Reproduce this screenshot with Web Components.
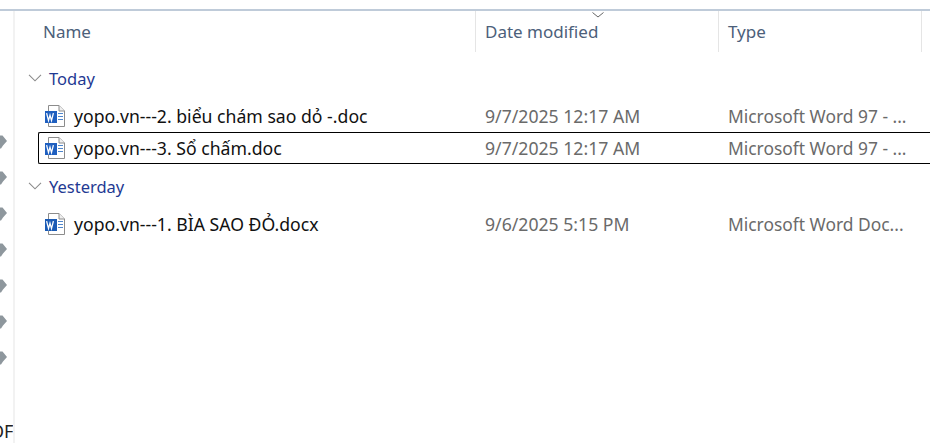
<!DOCTYPE html>
<html><head><meta charset="utf-8"><style>
html,body{margin:0;padding:0;background:#fff;height:100%;overflow:hidden}
body{font-family:"Noto Sans","Open Sans",sans-serif}
</style></head><body>
<template id="t-word"><style>
:host{display:block;width:22px;height:22px;flex:none}svg{display:block}
</style><svg width="22" height="22" viewBox="0 0 22 22"><path d="M4.5 .5H15L20.5 6V21.5H4.5Z" fill="#fff" stroke="#8c8c8c"/><path d="M15 .5V6H20.5" fill="#efefef" stroke="#8c8c8c"/><path d="M14 8.5h5M14 11.5h5M14 14.5h5" stroke="#4f86cc"/><rect x="1" y="6" width="12" height="12" fill="var(--blue,#1f5fbf)"/><path d="M2.6 8.2l1.9 7.4 1.5-5.4 1.5 5.4 1.9-7.4" fill="none" stroke="#fff" stroke-width="1.3"/></svg></template>
<template id="t-app"><style>
:host{display:flex;width:930px;height:443px;box-sizing:border-box;flex-direction:column;overflow:hidden}
.top{height:9px;flex:none;background:#fff}
.rule{height:2px;flex:none;background:#bfcbd9}
.main{flex:1;display:flex;min-height:0}
.rail{width:13px;flex:none;border-right:2px solid #f2f2f2;position:relative;overflow:hidden}
.list{flex:1;min-width:0;display:flex;flex-direction:column}
</style><div class="top"></div><div class="rule"></div><div class="main"><div class="rail"><slot name="rail"></slot></div><div class="list"><slot></slot></div></div></template>
<template id="t-head"><style>
:host{display:grid;grid-template-columns:461px 243px 203px;height:41px;color:#4c607a;font-size:17px;position:relative}
</style><slot></slot></template>
<template id="t-hcol"><style>
:host{display:flex;align-items:center;padding-left:9px;box-sizing:border-box;border-right:1px solid #e5e5e5;height:41px;position:relative}
:host(.first){padding-left:28px}
.s{position:absolute;left:116px;top:1px;display:none}
:host(.sorted) .s{display:block}
</style><slot></slot><svg class="s" width="12" height="6" viewBox="0 0 12 6"><path d="M.5 .5L6 5l5.5-4.5" fill="none" stroke="#666"/></svg></template>
<template id="t-group"><style>
:host{display:flex;align-items:center;height:24px;color:#1f3a93;font-size:16.5px;margin-left:13px;gap:7px;box-sizing:border-box}
</style><svg width="14" height="8" viewBox="0 0 14 8"><path d="M1 .8L7 6.8 13 .8" fill="none" stroke="#8a8a8a" stroke-width="1.1"/></svg><slot></slot></template>
<template id="t-row"><style>
:host{display:grid;grid-template-columns:441px 243px 1fr;height:32px;align-items:center;margin-left:23px;box-sizing:border-box;padding-left:5px;font-size:17.65px;color:#6a6a6a;white-space:nowrap;border:1px solid transparent;border-right:0}
:host([selected]){border-color:#000;border-radius:2px 0 0 2px}
.n{display:flex;align-items:center;gap:8px;color:#111}
.t{font-size:17.4px}
</style><div class="n"><word-icon></word-icon><slot name="name"></slot></div><div class="d"><slot name="date"></slot></div><div class="t"><slot name="type"></slot></div></template>
<template id="t-pin"><style>
:host{display:block;position:absolute;left:0;width:8px;height:14px}svg{display:block}
</style><svg width="8" height="14" viewBox="0 0 8 14"><path d="M0 0.5H2.5L7 6L3 10.5L1 13.5H0Z" fill="#8e979d"/></svg></template>
<template id="t-clip"><style>
:host{display:block;position:absolute;left:-10px;top:410px;font-size:18px;line-height:20px;color:#222;white-space:nowrap}
</style><slot></slot></template>

<file-app>
 <rail-pin slot="rail" style="top:124px"></rail-pin>
 <rail-pin slot="rail" style="top:160px"></rail-pin>
 <rail-pin slot="rail" style="top:196px"></rail-pin>
 <rail-pin slot="rail" style="top:232px"></rail-pin>
 <rail-pin slot="rail" style="top:268px"></rail-pin>
 <rail-pin slot="rail" style="top:304px"></rail-pin>
 <rail-pin slot="rail" style="top:340px"></rail-pin>
 <rail-clip slot="rail">OF</rail-clip>
 <col-head>
  <head-col class="first">Name</head-col>
  <head-col class="sorted">Date modified</head-col>
  <head-col>Type</head-col>
 </col-head>
 <group-row style="margin-top:14px">Today</group-row>
 <file-row style="margin-top:10px"><span slot="name">yopo.vn---2. biểu chám sao dỏ -.doc</span><span slot="date">9/7/2025 12:17 AM</span><span slot="type">Microsoft Word 97 - ...</span></file-row>
 <file-row selected><span slot="name">yopo.vn---3. Sổ chấm.doc</span><span slot="date">9/7/2025 12:17 AM</span><span slot="type">Microsoft Word 97 - ...</span></file-row>
 <group-row style="margin-top:10px">Yesterday</group-row>
 <file-row style="margin-top:10px;--blue:#1b5bb5"><span slot="name">yopo.vn---1. BÌA SAO ĐỎ.docx</span><span slot="date">9/6/2025 5:15 PM</span><span slot="type">Microsoft Word Doc...</span></file-row>
</file-app>
<script>
const def=(n,t)=>customElements.define(n,class extends HTMLElement{constructor(){super();this.attachShadow({mode:'open'}).appendChild(document.getElementById(t).content.cloneNode(true))}});
def('word-icon','t-word');def('file-app','t-app');def('col-head','t-head');def('head-col','t-hcol');def('group-row','t-group');def('file-row','t-row');def('rail-pin','t-pin');def('rail-clip','t-clip');
</script>
</body></html>
